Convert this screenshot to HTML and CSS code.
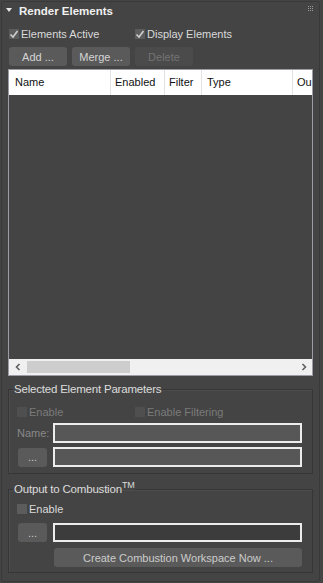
FILE: index.html
```html
<!DOCTYPE html>
<html lang="en">
<head>
    <meta charset="UTF-8">
    <meta name="viewport" content="width=device-width, initial-scale=1.0">
    <title>Render Elements</title>
    <link rel="stylesheet" href="styles.css">
</head>
<body>
    <div class="rollout">
        <div class="rollout-title">
            <span class="arrow"></span>
            <span class="title-text">Render Elements</span>
            <svg class="grip" width="5" height="5" viewBox="0 0 5 5">
                <rect x="0" y="0" width="1" height="1"/><rect x="2" y="0" width="1" height="1"/><rect x="4" y="0" width="1" height="1"/>
                <rect x="0" y="2" width="1" height="1"/><rect x="2" y="2" width="1" height="1"/><rect x="4" y="2" width="1" height="1"/>
                <rect x="0" y="4" width="1" height="1"/><rect x="2" y="4" width="1" height="1"/><rect x="4" y="4" width="1" height="1"/>
            </svg>
        </div>

        <div class="checks">
            <label class="check">
                <span class="box"><svg width="10" height="10" viewBox="0 0 10 10"><path d="M1.5 5.5 L4 8 L8.5 2"/></svg></span>
                Elements Active
            </label>
            <label class="check">
                <span class="box"><svg width="10" height="10" viewBox="0 0 10 10"><path d="M1.5 5.5 L4 8 L8.5 2"/></svg></span>
                Display Elements
            </label>
        </div>

        <div class="buttons">
            <button class="btn">Add ...</button>
            <button class="btn">Merge ...</button>
            <button class="btn" disabled>Delete</button>
        </div>

        <div class="list">
            <div class="list-head">
                <div class="col col-name">Name</div>
                <div class="col col-enabled">Enabled</div>
                <div class="col col-filter">Filter</div>
                <div class="col col-type">Type</div>
                <div class="col col-out">Ou</div>
            </div>
            <div class="list-body"></div>
            <div class="hscroll">
                <span class="scroll-arrow">
                    <svg width="8" height="8" viewBox="0 0 8 8"><path d="M5.5 1 L2.5 4 L5.5 7"/></svg>
                </span>
                <div class="track"><div class="thumb"></div></div>
                <span class="scroll-arrow">
                    <svg width="8" height="8" viewBox="0 0 8 8"><path d="M2.5 1 L5.5 4 L2.5 7"/></svg>
                </span>
            </div>
        </div>

        <fieldset class="group group-selected">
            <legend>Selected Element Parameters</legend>
            <div class="row split">
                <label class="check disabled"><span class="box"></span>Enable</label>
                <label class="check disabled"><span class="box"></span>Enable Filtering</label>
            </div>
            <div class="row field name-row">
                <span class="field-label">Name:</span>
                <input class="text-input" type="text" disabled>
            </div>
            <div class="row field path-row">
                <button class="btn btn-small">...</button>
                <input class="text-input" type="text" disabled>
            </div>
        </fieldset>

        <fieldset class="group group-output">
            <legend>Output to Combustion<sup>TM</sup></legend>
            <div class="row">
                <label class="check"><span class="box"></span>Enable</label>
            </div>
            <div class="row field path-row">
                <button class="btn btn-small">...</button>
                <input class="text-input dark" type="text">
            </div>
            <button class="btn btn-wide">Create Combustion Workspace Now ...</button>
        </fieldset>
    </div>
</body>
</html>
```

FILE: styles.css
```css
body {
    margin: 0;
    background-color: #444444;
    font-family: "Liberation Sans", Arial, sans-serif;
    font-size: 11px;
    color: #dadada;
}
.rollout {
    box-sizing: border-box;
    width: 319px;
    height: 581px;
    margin: 1px 0 0 1px;
    padding: 0 6px;
    background-color: #444444;
    border: 1px solid #393939;
    border-radius: 3px;
}
.rollout-title {
    display: flex;
    align-items: center;
    height: 18px;
}
.arrow {
    width: 0;
    height: 0;
    margin-left: -2px;
    margin-top: -2px;
    border-left: 3px solid transparent;
    border-right: 3px solid transparent;
    border-top: 4px solid #e8e8e8;
}
.title-text {
    margin-left: 7px;
    font-weight: bold;
    font-size: 11.5px;
    color: #f0f0f0;
}
.grip {
    margin-left: auto;
    margin-right: 0;
    margin-top: -5px;
    fill: #9a9a9a;
}
.checks {
    display: grid;
    grid-template-columns: 126px 1fr;
    height: 14px;
    margin-top: 7px;
    padding-left: 1px;
}
.check {
    display: flex;
    align-items: center;
    height: 14px;
    line-height: 14px;
}
.box {
    display: inline-block;
    width: 10px;
    height: 10px;
    margin-right: 2px;
    background-color: #5c5c5c;
}
.box svg {
    display: block;
    fill: none;
    stroke: #cfcfcf;
    stroke-width: 1.6;
}
.check.disabled {
    color: #7b7b7b;
}
.check.disabled .box {
    background-color: #4f4f4f;
}
.buttons {
    display: flex;
    gap: 5px;
    margin-top: 6px;
    padding-left: 1px;
}
.btn {
    box-sizing: border-box;
    height: 19px;
    padding: 0;
    border: none;
    border-radius: 3px;
    background-color: #5a5a5a;
    color: #d4d4d4;
    font-family: inherit;
    font-size: 11px;
}
.buttons .btn {
    width: 58px;
}
.btn:disabled {
    background-color: #4b4b4b;
    color: #737373;
}
.list {
    box-sizing: border-box;
    height: 307px;
    margin-top: 3px;
    border: 1px solid #9c9ca4;
    display: flex;
    flex-direction: column;
}
.list-head {
    display: flex;
    height: 25px;
    background-color: #ffffff;
    color: #111111;
    overflow: hidden;
}
.col {
    flex: none;
    box-sizing: border-box;
    padding-left: 4px;
    line-height: 25px;
    border-right: 1px solid #e2e2e2;
    white-space: nowrap;
}
.col-name {
    width: 102px;
    padding-left: 6px;
}
.col-enabled {
    width: 54px;
}
.col-filter {
    width: 37px;
}
.col-type {
    width: 91px;
    padding-left: 5px;
}
.col-out {
    flex: 1;
    min-width: 0;
    border-right: none;
}
.list-body {
    flex: 1;
    background-color: #444444;
}
.hscroll {
    display: flex;
    align-items: center;
    height: 16px;
    background-color: #f0f0f0;
}
.scroll-arrow {
    display: flex;
    align-items: center;
    justify-content: center;
    width: 17px;
    height: 16px;
}
.scroll-arrow svg {
    fill: none;
    stroke: #606060;
    stroke-width: 1.6;
}
.track {
    flex: 1;
    height: 12px;
}
.thumb {
    width: 103px;
    height: 12px;
    margin-left: 1px;
    background-color: #cdcdcd;
}
.group {
    margin: 6px 0 0 0;
    padding: 9px 10px 6px 8px;
    border: 1px solid #363636;
    box-shadow: inset 1px 1px 0 #4c4c4c;
    min-inline-size: 0;
}
.group legend {
    margin-left: -4px;
    padding: 0 1px;
    font-size: 11.5px;
    line-height: 14px;
    letter-spacing: -0.2px;
    color: #dcdcdc;
}
.group legend sup {
    font-size: 9px;
    line-height: 0;
}
.row.split {
    display: grid;
    grid-template-columns: 118px 1fr;
}
.field {
    display: grid;
    grid-template-columns: 36px 1fr;
    align-items: center;
    height: 20px;
    margin-top: 4px;
}
.field-label {
    color: #888888;
    font-size: 11px;
}
.btn-small {
    width: 29px;
    height: 19px;
    margin-left: 1px;
    color: #c8c8c8;
}
.text-input {
    box-sizing: border-box;
    width: 249px;
    height: 20px;
    margin: 0;
    border: 2px solid #ececec;
    background-color: #575757;
    outline: none;
}
.text-input.dark {
    background-color: #3c3c3c;
}
.group-output {
    margin-top: 8px;
    padding-top: 6px;
    padding-bottom: 5px;
}
.group-output .path-row {
    margin-top: 7px;
    height: 19px;
}
.group-output .text-input {
    height: 19px;
}
.btn-wide {
    display: block;
    width: 248px;
    margin: 6px 0 0 37px;
    color: #cccccc;
}
```
